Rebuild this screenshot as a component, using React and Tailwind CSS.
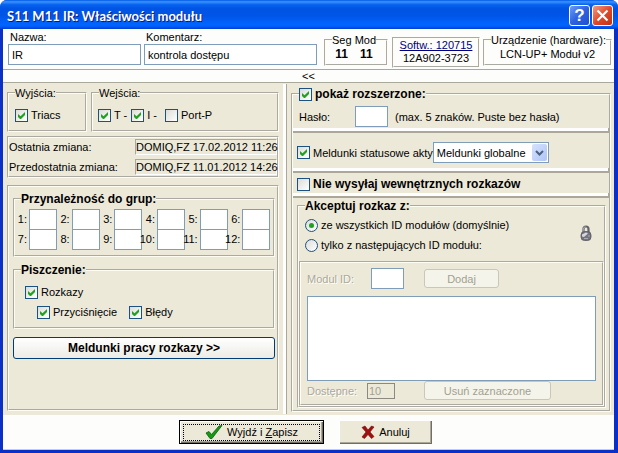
import clsx from "clsx";

const groups = [1, 2, 3, 4, 5, 6, 7, 8, 9, 10, 11, 12];

const groove = "border-2 border-[#fffdf2] [border-style:groove]";
const textBox = "h-[21px] border border-[#7f9db9] bg-white px-[3px] outline-none";

function Group({ title, bold, className, children }) {
  return (
    <fieldset className={clsx("min-w-0", groove, className)}>
      <legend className={clsx("ml-1.5 h-3.5 whitespace-nowrap", bold && "text-[12px] leading-[14px] font-bold")}>
        {title}
      </legend>
      {children}
    </fieldset>
  );
}

function Check({ label, checked, bold }) {
  return (
    <label
      className={clsx(
        "flex h-3.5 items-center gap-[3px] whitespace-nowrap",
        bold && "text-[12px] leading-[14px] font-bold"
      )}
    >
      <span className="grid size-[13px] shrink-0">
        <input
          type="checkbox"
          defaultChecked={checked}
          className="peer col-start-1 row-start-1 size-[13px] appearance-none border border-[#1c5180] bg-linear-to-br from-[#dcdcd7] to-white"
        />
        <svg
          viewBox="0 0 13 13"
          className="pointer-events-none invisible col-start-1 row-start-1 size-[13px] peer-checked:visible"
        >
          <path d="M3 5v3l2 2h1l4-4V3L5.500 7.300z" fill="#21a121" />
        </svg>
      </span>
      {label}
    </label>
  );
}

function Radio({ label, checked }) {
  return (
    <label className="flex h-3.5 items-center gap-[3px] whitespace-nowrap">
      <span className="grid size-[13px] shrink-0 place-items-center">
        <input
          type="radio"
          name="accept"
          defaultChecked={checked}
          className="peer col-start-1 row-start-1 size-[13px] appearance-none rounded-full border border-[#1c5180] bg-linear-to-br from-[#dcdcd7] to-white"
        />
        <span className="pointer-events-none invisible col-start-1 row-start-1 size-[5px] rounded-full bg-[#21a121] peer-checked:visible" />
      </span>
      {label}
    </label>
  );
}

function Splitter({ className }) {
  return (
    <div
      className={clsx("h-[5px] shrink-0 border-b-2 border-[#aca899] border-r bg-white", className)}
    />
  );
}

function TitleBar() {
  return (
    <header className="flex h-[29px] shrink-0 items-center gap-0.5 bg-[linear-gradient(180deg,#0058e6_0%,#3a93ff_6%,#0763ee_16%,#0054e3_30%,#0055e8_55%,#0066ff_85%,#005bf5_92%,#003dd0_100%)] pt-0.5 pr-[5px] pl-[7px]">
      <h1 className="flex-1 font-['Lato',sans-serif] text-[13px] leading-5 font-bold whitespace-nowrap text-white [text-shadow:1px_1px_#0a1883]">
        S11 M11 IR: Właściwości modułu
      </h1>
      <button
        aria-label="Pomoc"
        className="size-[21px] rounded-[3px] border border-white bg-linear-to-br from-[#6c9bf8] via-[#2f62e0] to-[#1e50d0] text-[17px] leading-[18px] font-bold text-white"
      >
        ?
      </button>
      <button
        aria-label="Zamknij"
        className="grid size-[21px] place-items-center rounded-[3px] border border-white bg-linear-to-br from-[#f0997f] via-[#e0492a] to-[#c03312]"
      >
        <svg viewBox="0 0 13 13" className="size-[13px]">
          <path d="M1.500 1.500l10 10M11.500 1.500l-10 10" stroke="#fff" strokeWidth="2.200" />
        </svg>
      </button>
    </header>
  );
}

function ModuleInfo() {
  return (
    <div className="flex h-[41px] shrink-0 border-b border-[#aca899] pt-px pr-0.5 pl-[5px]">
      <label className="flex w-[133px] flex-col">
        <span className="pl-0.5">Nazwa:</span>
        <input defaultValue="IR" className={textBox} />
      </label>
      <label className="ml-[3px] flex min-w-0 flex-1 flex-col">
        <span className="pl-0.5">Komentarz:</span>
        <input defaultValue="kontrola dostępu" className={clsx(textBox, "w-full")} />
      </label>
      <Group title="Seg Mod" className="mt-[3px] ml-[7px] h-[33px] w-16">
        <div className="flex justify-center gap-3 pr-1 text-[12px] leading-[14px] font-bold">
          <span>11</span>
          <span>11</span>
        </div>
      </Group>
      <div className={clsx("mt-[7px] ml-1 h-[31px] w-[88px] text-center leading-[13px]", groove)}>
        <a href="#softw" className="block text-[#000080] underline">
          Softw.: 120715
        </a>
        12A902-3723
      </div>
      <Group title="Urządzenie (hardware):" className="mt-[3px] ml-[3px] h-[33px] w-[129px]">
        <div className="text-center">LCN-UP+ Moduł v2</div>
      </Group>
    </div>
  );
}

function Change({ label, value }) {
  return (
    <div className="flex items-center">
      <dt className="flex-1">{label}</dt>
      <dd className="w-[142px] border border-t-[#aca899] border-r-white border-b-white border-l-[#aca899] whitespace-nowrap">
        {value}
      </dd>
    </div>
  );
}

function LeftPane() {
  return (
    <section className="flex w-[280px] shrink-0 flex-col px-1 pt-[3px] pb-1">
      <div className="flex gap-1">
        <Group title="Wyjścia:" className="w-20">
          <div className="px-1.5 py-2">
            <Check label="Triacs" checked />
          </div>
        </Group>
        <Group title="Wejścia:" className="flex-1">
          <div className="flex gap-1 px-[5px] py-2">
            <Check label="T -" checked />
            <Check label="I -" checked />
            <span className="w-0" />
            <Check label="Port-P" />
          </div>
        </Group>
      </div>

      <dl className={clsx("mt-1 flex flex-col gap-1 py-px", groove)}>
        <Change label="Ostatnia zmiana:" value="DOMIQ,FZ 17.02.2012 11:26" />
        <Change label="Przedostatnia zmiana:" value="DOMIQ,FZ 11.01.2012 14:26" />
      </dl>

      <div className={clsx("mt-[7px] flex flex-1 flex-col pt-[5px] pr-0.5 pl-1", groove)}>
        <Group title="Przynależność do grup:" bold>
          <div className="grid grid-cols-6 pt-[3px] pr-0.5 pb-1.5">
            {groups.map((n) => (
              <label key={n} className="flex h-5 items-center">
                <span className="flex w-3.5 justify-end pr-0.5 whitespace-nowrap">{n}:</span>
                <input className="-mb-px h-[21px] w-7 border border-[#7f9db9] bg-white text-center outline-none" />
              </label>
            ))}
          </div>
        </Group>
        <Group title="Piszczenie:" bold className="mt-1.5">
          <div className="flex flex-col gap-1.5 py-2 pl-2.5">
            <Check label="Rozkazy" checked />
            <div className="flex gap-3 pl-3">
              <Check label="Przyciśnięcie" checked />
              <Check label="Błędy" checked />
            </div>
          </div>
        </Group>
        <button className="mt-2 h-[22px] rounded-[3px] border border-[#003c74] bg-linear-to-b from-white to-[#ecebe5] text-[12px] leading-[14px] font-bold">
          Meldunki pracy rozkazy &gt;&gt;
        </button>
      </div>
    </section>
  );
}

function Lock() {
  return (
    <svg viewBox="0 0 12 16" className="mt-[7px] mr-3 h-4 w-3">
      <path d="M3.500 8V4a2.500 2.500 0 0 1 5 0v4" fill="none" stroke="#62626c" strokeWidth="2.200" />
      <path d="M3.300 7V4a2.500 2.500 0 0 1 2.200-2.300" fill="none" stroke="#b9b9c4" strokeWidth=".8" />
      <rect x="1" y="6.500" width="10" height="9" rx="3.500" fill="#74747f" stroke="#55555e" strokeWidth=".8" />
      <path d="M2 9.500l4-2 2 1-4 3.500-2-.5z" fill="#d6d6de" />
      <path d="M4 13.500h4M8 11h2" stroke="#a9a9b4" />
    </svg>
  );
}

function AcceptGroup() {
  const disabledButton = "h-[19px] rounded-[3px] border border-[#c9c7ba] bg-[#f5f4ea] text-[#a1a192]";
  return (
    <Group title="Akceptuj rozkaz z:" bold className="mt-px mr-[3px] mb-0.5 ml-1 flex flex-1 flex-col">
      <div className="flex pt-[5px]">
        <div className="flex flex-1 flex-col gap-1.5 pl-1.5">
          <Radio label="ze wszystkich ID modułów (domyślnie)" checked />
          <Radio label="tylko z następujących ID modułu:" />
        </div>
        <Lock />
      </div>
      <div className={clsx("mt-[9px] flex flex-1 flex-col px-1.5 pt-[5px] pb-1", groove)}>
        <div className="flex items-center">
          <label htmlFor="module-id" className="w-16 text-[#aca899] [text-shadow:1px_1px_#fff]">
            Modul ID:
          </label>
          <input id="module-id" disabled className={clsx(textBox, "w-[33px]")} />
          <button disabled className={clsx(disabledButton, "ml-5 w-[75px]")}>
            Dodaj
          </button>
        </div>
        <select
          multiple
          disabled
          aria-label="ID modułów"
          className="mt-[7px] min-h-[84px] w-full flex-1 appearance-none border border-[#7f9db9] bg-white opacity-100"
        />
        <div className="flex items-center">
          <label htmlFor="available" className="w-[60px] text-[#aca899] [text-shadow:1px_1px_#fff]">
            Dostępne:
          </label>
          <input
            id="available"
            disabled
            defaultValue="10"
            className="h-4 w-7 border border-[#8b8a80] px-px text-[#a1a192]"
          />
          <button disabled className={clsx(disabledButton, "ml-[29px] w-[127px]")}>
            Usuń zaznaczone
          </button>
        </div>
      </div>
    </Group>
  );
}

function RightPane() {
  return (
    <section className="flex min-w-0 flex-1 flex-col pt-1 pr-[3px] pb-[3px] pl-1">
      <Group title={<Check label="pokaż rozszerzone:" checked bold />} className="flex flex-1 flex-col">
        <div className="flex items-center pt-[5px] pl-1.5">
          <label htmlFor="password" className="w-14">
            Hasło:
          </label>
          <input id="password" className={clsx(textBox, "mr-[7px] w-[33px]")} />
          (max. 5 znaków. Puste bez hasła)
        </div>
        <Splitter className="mt-px" />
        <div className="mt-[9px] flex items-center pl-1">
          <Check label="Meldunki statusowe akty" checked />
          <span className="grid w-[116px] items-center">
            <select
              aria-label="Meldunki"
              className="col-start-1 row-start-1 h-[21px] appearance-none border border-[#7f9db9] bg-white pl-[3px]"
            >
              <option>Meldunki globalne</option>
            </select>
            <span className="pointer-events-none col-start-1 row-start-1 mr-0.5 grid h-[17px] w-[15px] place-items-center justify-self-end rounded-[2px] bg-linear-to-br from-[#d5e2fd] to-[#afc5f5]">
              <svg viewBox="0 0 9 6" className="h-1.5 w-[9px]">
                <path d="M1 1l3.500 3.500L8 1" fill="none" stroke="#4d6185" strokeWidth="2" />
              </svg>
            </span>
          </span>
        </div>
        <Splitter className="mt-[5px]" />
        <div className="mt-1 pl-1">
          <Check label="Nie wysyłaj wewnętrznych rozkazów" bold />
        </div>
        <Splitter className="mt-0.5" />
        <AcceptGroup />
      </Group>
    </section>
  );
}

function Footer() {
  return (
    <footer className="flex h-[35px] shrink-0 items-center justify-center gap-[15px] border-b border-[#b9cdf5] bg-[#fdfdfb] pr-1.5">
      <button className="h-6 w-[145px] border border-black bg-[#ece9d8] shadow-[inset_1px_1px_#fff,inset_-1px_-1px_#716f64,inset_-2px_-2px_#aca899]">
        <span className="mx-[3px] flex h-[17px] items-center justify-center gap-1 border border-dotted border-black">
          <svg viewBox="0 0 18 14" className="h-3.5 w-[18px]">
            <path d="M1 8l3-1.500 2.500 3L14 1l3-.5L7 13.500H5z" fill="#149a14" stroke="#0b5c0b" strokeWidth=".8" />
          </svg>
          <span>
            Wyjdź i <u>Z</u>apisz
          </span>
        </span>
      </button>
      <button className="flex h-6 w-[93px] items-center justify-center gap-1 bg-[#ece9d8] shadow-[inset_1px_1px_#fff,inset_-1px_-1px_#716f64,inset_-2px_-2px_#aca899]">
        <svg viewBox="0 0 14 14" className="size-3.5">
          <path
            d="M1 2.500L4 1l3 4 3.500-4L13 2 9 7l4 4.500L10.500 13.500 7 9.500 3.500 13.500 1 12l4-5z"
            fill="#a01010"
            stroke="#6d0808"
            strokeWidth=".6"
          />
        </svg>
        Anuluj
      </button>
    </footer>
  );
}

export default function App() {
  return (
    <div className="flex min-h-screen flex-col overflow-hidden rounded-t-[7px] bg-[#0a30c8] pb-[3px] font-['Liberation_Sans',Arial,sans-serif] text-[11px] leading-[14px] text-black">
      <TitleBar />
      <div className="mr-1 ml-[3px] flex flex-1 flex-col bg-[#fdfdfb]">
        <ModuleInfo />
        <button className="h-[13px] shrink-0 border-b border-[#aca899] leading-3">&lt;&lt;</button>
        <main className="flex flex-1 bg-[#ece9d8]">
          <LeftPane />
          <div className="my-px w-1 shrink-0 border-r border-[#aca899] bg-white" />
          <RightPane />
        </main>
        <Footer />
      </div>
    </div>
  );
}
